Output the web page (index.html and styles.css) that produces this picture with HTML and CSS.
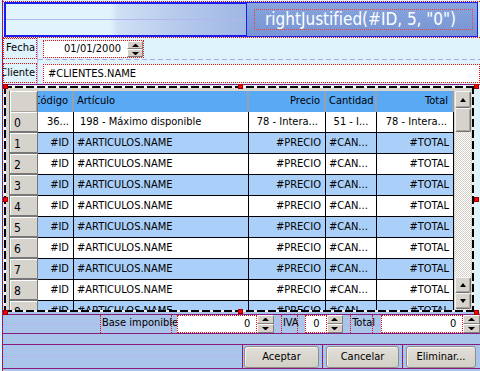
FILE: index.html
```html
<!DOCTYPE html>
<html lang="es">

<head>
    <meta charset="UTF-8">
    <meta name="viewport" content="width=device-width, initial-scale=1.0">
    <title>Pedido - diseño</title>
    <link rel="stylesheet" href="styles.css">
</head>

<body>
    <div class="form">
        <div class="banner">
            <div class="banner-art"></div>
            <div class="banner-title"><span class="title-field">rightJustified(#ID, 5, "0")</span></div>
        </div>

        <div class="fields">
            <div class="field-row">
                <label class="field-label">Fecha</label>
                <div class="spin-edit">
                    <div class="edit date-edit">01/01/2000</div>
                    <div class="spin"><span class="spin-up"></span><span class="spin-down"></span></div>
                </div>
            </div>
            <div class="field-row client-row">
                <label class="field-label">Cliente</label>
                <div class="edit client-edit">#CLIENTES.NAME</div>
            </div>
        </div>

        <div class="grid-frame">
            <div class="grid">
                <div class="grid-head">
                    <div class="corner"></div>
                    <div class="hcell c-cod right">Código</div>
                    <div class="hcell c-art">Artículo</div>
                    <div class="hcell c-pre right">Precio</div>
                    <div class="hcell c-can">Cantidad</div>
                    <div class="hcell c-tot right">Total</div>
                </div>
                <div class="grid-body">
                    <div class="grid-row">
                        <div class="rowhdr">0</div>
                        <div class="cell c-cod right">36...</div>
                        <div class="cell c-art first-art">198 - Máximo disponible</div>
                        <div class="cell c-pre right pad7">78 - Intera...</div>
                        <div class="cell c-can center">51 - I...</div>
                        <div class="cell c-tot right pad6">78 - Intera...</div>
                    </div>
                    <div class="grid-row">
                        <div class="rowhdr">1</div>
                        <div class="cell c-cod right">#ID</div>
                        <div class="cell c-art">#ARTICULOS.NAME</div>
                        <div class="cell c-pre right">#PRECIO</div>
                        <div class="cell c-can">#CAN...</div>
                        <div class="cell c-tot right">#TOTAL</div>
                    </div>
                    <div class="grid-row">
                        <div class="rowhdr">2</div>
                        <div class="cell c-cod right">#ID</div>
                        <div class="cell c-art">#ARTICULOS.NAME</div>
                        <div class="cell c-pre right">#PRECIO</div>
                        <div class="cell c-can">#CAN...</div>
                        <div class="cell c-tot right">#TOTAL</div>
                    </div>
                    <div class="grid-row">
                        <div class="rowhdr">3</div>
                        <div class="cell c-cod right">#ID</div>
                        <div class="cell c-art">#ARTICULOS.NAME</div>
                        <div class="cell c-pre right">#PRECIO</div>
                        <div class="cell c-can">#CAN...</div>
                        <div class="cell c-tot right">#TOTAL</div>
                    </div>
                    <div class="grid-row">
                        <div class="rowhdr">4</div>
                        <div class="cell c-cod right">#ID</div>
                        <div class="cell c-art">#ARTICULOS.NAME</div>
                        <div class="cell c-pre right">#PRECIO</div>
                        <div class="cell c-can">#CAN...</div>
                        <div class="cell c-tot right">#TOTAL</div>
                    </div>
                    <div class="grid-row">
                        <div class="rowhdr">5</div>
                        <div class="cell c-cod right">#ID</div>
                        <div class="cell c-art">#ARTICULOS.NAME</div>
                        <div class="cell c-pre right">#PRECIO</div>
                        <div class="cell c-can">#CAN...</div>
                        <div class="cell c-tot right">#TOTAL</div>
                    </div>
                    <div class="grid-row">
                        <div class="rowhdr">6</div>
                        <div class="cell c-cod right">#ID</div>
                        <div class="cell c-art">#ARTICULOS.NAME</div>
                        <div class="cell c-pre right">#PRECIO</div>
                        <div class="cell c-can">#CAN...</div>
                        <div class="cell c-tot right">#TOTAL</div>
                    </div>
                    <div class="grid-row">
                        <div class="rowhdr">7</div>
                        <div class="cell c-cod right">#ID</div>
                        <div class="cell c-art">#ARTICULOS.NAME</div>
                        <div class="cell c-pre right">#PRECIO</div>
                        <div class="cell c-can">#CAN...</div>
                        <div class="cell c-tot right">#TOTAL</div>
                    </div>
                    <div class="grid-row">
                        <div class="rowhdr">8</div>
                        <div class="cell c-cod right">#ID</div>
                        <div class="cell c-art">#ARTICULOS.NAME</div>
                        <div class="cell c-pre right">#PRECIO</div>
                        <div class="cell c-can">#CAN...</div>
                        <div class="cell c-tot right">#TOTAL</div>
                    </div>
                    <div class="grid-row">
                        <div class="rowhdr">9</div>
                        <div class="cell c-cod right">#ID</div>
                        <div class="cell c-art">#ARTICULOS.NAME</div>
                        <div class="cell c-pre right">#PRECIO</div>
                        <div class="cell c-can">#CAN...</div>
                        <div class="cell c-tot right">#TOTAL</div>
                    </div>
                </div>
            </div>
            <div class="vscroll">
                <span class="sb-btn"><i class="arrow-up"></i></span>
                <span class="sb-thumb"></span>
                <span class="sb-track"></span>
                <span class="sb-btn"><i class="arrow-up"></i></span>
                <span class="sb-btn"><i class="arrow-down"></i></span>
            </div>
            <!-- selection handles -->
            <span class="handle h-tl"></span>
            <span class="handle h-tm"></span>
            <span class="handle h-tr"></span>
            <span class="handle h-ml"></span>
            <span class="handle h-mr"></span>
            <span class="handle h-bl"></span>
            <span class="handle h-bm"></span>
            <span class="handle h-br"></span>
        </div>

        <div class="footer">
            <div class="totals">
                <label class="sum-label base-label">Base imponible</label>
                <div class="edit num-edit base-edit">0</div>
                <div class="spin"><span class="spin-up"></span><span class="spin-down"></span></div>
                <label class="sum-label iva-label">IVA</label>
                <div class="edit num-edit iva-edit">0</div>
                <div class="spin"><span class="spin-up"></span><span class="spin-down"></span></div>
                <label class="sum-label total-label">Total</label>
                <div class="edit num-edit total-edit">0</div>
                <div class="spin"><span class="spin-up"></span><span class="spin-down"></span></div>
            </div>
            <div class="band"></div>
            <div class="buttons">
                <div class="btn-slot slot-ok"><button class="btn">Aceptar</button></div>
                <div class="btn-slot slot-cancel"><button class="btn">Cancelar</button></div>
                <div class="btn-slot slot-del"><button class="btn">Eliminar...</button></div>
            </div>
        </div>
    </div>
</body>

</html>
```

FILE: styles.css
```css
* {
    box-sizing: border-box;
}

body {
    margin: 0;
    width: 480px;
    height: 371px;
    overflow: hidden;
    background-color: #dff3fc;
    font-family: "DejaVu Sans", sans-serif;
    font-stretch: condensed;
    font-size: 11px;
    color: #000;
}

.form {
    width: 478px;
    height: 371px;
    margin-left: 2px;
    border-left: 1px dotted #e81010;
    background: linear-gradient(#2424f0, #2424f0) left top / 1px 100% no-repeat;
    background-origin: border-box;
    overflow: hidden;
}

/* banner */

.banner {
    display: flex;
    height: 37px;
    margin-top: 1px;
    padding-left: 1px;
    border-top: 1px dotted #e81010;
    border-bottom: 1px dotted #e81010;
}

.banner-art {
    flex: 1;
    border: 2px solid #1c1cec;
    border-right: none;
    background:
        linear-gradient(to bottom, transparent 15px, #b4b4ee 15px, #b4b4ee 16px, transparent 16px),
        linear-gradient(90deg, #e1f4fc 0, #e1f4fc 104px, #cfe0f4 112px, #b6caec 170px, #9fb7e4 100%);
}

.banner-title {
    display: flex;
    align-items: center;
    width: 232px;
    margin-right: 2px;
    padding-left: 7px;
    border: 1px solid #1c1cec;
    background: linear-gradient(#88a5dd, #7795d4);
}

.title-field {
    width: 219px;
    height: 21px;
    padding-left: 10px;
    border: 1px dotted #f03c3c;
    color: #fff;
    font-size: 17px;
    line-height: 18px;
    white-space: nowrap;
}

/* header fields */

.fields {
    height: 47px;
    border-bottom: 1px dotted #e81010;
    background:
        linear-gradient(#2424f0, #2424f0) left bottom / 100% 1px no-repeat,
        linear-gradient(#b8b8f2, #b8b8f2) 34px 0 / 1px 100% no-repeat,
        repeating-linear-gradient(90deg, #a8a8ee 0, #a8a8ee 5px, transparent 5px, transparent 8px) 35px 21px / 100% 1px no-repeat;
    background-origin: border-box;
}

.field-row {
    display: flex;
    align-items: flex-start;
    height: 21px;
}

.client-row {
    margin-top: 4px;
    height: 20px;
}

.field-label {
    display: flex;
    justify-content: flex-end;
    width: 34px;
    height: 21px;
    padding-right: 1px;
    border: 1px dotted #e81010;
    line-height: 17px;
    white-space: nowrap;
}

.client-row .field-label {
    height: 20px;
}

.edit {
    background-color: #fff;
    line-height: 15px;
    white-space: nowrap;
}

.spin-edit {
    display: flex;
    margin: 2px 0 0 6px;
    border: 1px dotted #e81010;
}

.date-edit {
    width: 83px;
    height: 16px;
    padding-right: 6px;
    text-align: right;
}

.client-edit {
    flex: 1;
    height: 19px;
    margin: 1px 0 0 6px;
    padding-left: 4px;
    border: 1px dotted #e81010;
    line-height: 17px;
}

.spin {
    display: flex;
    flex-direction: column;
    width: 16px;
    height: 16px;
}

.spin-up,
.spin-down {
    flex: 1;
    display: flex;
    align-items: center;
    justify-content: center;
    background-color: #d4d0c8;
    border: 1px solid;
    border-color: #fff #808080 #808080 #fff;
}

.spin-up::after,
.spin-down::after {
    content: "";
    width: 1px;
    border-left: 3px solid transparent;
    border-right: 3px solid transparent;
}

.spin-up::after {
    border-bottom: 3px solid #000;
}

.spin-down::after {
    border-top: 3px solid #000;
}

/* grid */

.grid-frame {
    position: relative;
    display: flex;
    gap: 1px;
    width: 470px;
    height: 226px;
    margin: 1px 0 0 1px;
    padding: 5px 3px 2px 5px;
    background:
        repeating-linear-gradient(90deg, #000 0, #000 8px, #f0f0f0 8px, #f0f0f0 11px) top / 100% 2px no-repeat,
        repeating-linear-gradient(90deg, #000 0, #000 8px, #f0f0f0 8px, #f0f0f0 11px) bottom / 100% 2px no-repeat,
        repeating-linear-gradient(#000 0, #000 8px, #f0f0f0 8px, #f0f0f0 11px) left / 2px 100% no-repeat,
        repeating-linear-gradient(#000 0, #000 8px, #f0f0f0 8px, #f0f0f0 11px) right / 2px 100% no-repeat,
        #d8d5ce;
}

.grid {
    width: 445px;
    height: 219px;
    overflow: hidden;
    background-color: #fff;
}

.grid-head,
.grid-row {
    display: flex;
    height: 21px;
}

.grid-head {
    background-color: #5aa9f5;
}

.corner {
    width: 29px;
    border-left: 1px solid #777;
    border-right: 1px solid #777;
    background-color: #d6d3cd;
    box-shadow: inset 1px 1px #fff, inset -1px -1px #a8a59e;
}

.hcell,
.cell {
    display: flex;
    overflow: hidden;
    white-space: nowrap;
    padding: 0 3px;
}

.hcell {
    border-right: 2px solid #97a2ae;
    line-height: 20px;
}

.cell {
    border-right: 1px solid #000;
    border-bottom: 1px solid #000;
    line-height: 19px;
}

.right {
    justify-content: flex-end;
    padding-right: 4px;
}

.center {
    justify-content: center;
}

.pad7 {
    padding-right: 7px;
}

.pad6 {
    padding-right: 6px;
}

.c-cod {
    width: 36px;
}

.c-art {
    width: 175px;
}

.first-art {
    padding-left: 6px;
}

.c-pre {
    width: 77px;
}

.c-can {
    width: 51px;
}

.c-tot {
    width: 77px;
}

.grid-row:nth-child(even) {
    background-color: #aad0fa;
}

.rowhdr {
    width: 29px;
    padding: 4px 0 0 4px;
    border-left: 1px solid #777;
    border-right: 1px solid #777;
    border-bottom: 2px solid #777;
    background-color: #d6d3cd;
    box-shadow: inset 1px 1px #fff;
    font-size: 12px;
    line-height: 14px;
}

.vscroll {
    display: flex;
    flex-direction: column;
    width: 16px;
    height: 219px;
    padding-bottom: 1px;
    background: repeating-conic-gradient(#fff 0 25%, #d4d0c8 0 50%) 0 0 / 2px 2px;
}

.sb-btn,
.sb-thumb {
    display: flex;
    align-items: center;
    justify-content: center;
    height: 16px;
    background-color: #d6d3cc;
    border: 1px solid;
    border-color: #f4f4f4 #707070 #707070 #f4f4f4;
    border-radius: 2px;
    box-shadow: inset -1px -1px #a8a59e;
}

.sb-btn:first-child {
    height: 17px;
}

.sb-thumb {
    height: 24px;
}

.sb-track {
    flex: 1;
}

.arrow-up,
.arrow-down {
    width: 1px;
    border-left: 3px solid transparent;
    border-right: 3px solid transparent;
}

.arrow-up {
    border-bottom: 4px solid #000;
}

.arrow-down {
    border-top: 4px solid #000;
}

.handle {
    position: absolute;
    width: 5px;
    height: 5px;
    background-color: #f00;
    border: 1px solid #900;
}

.h-tl { left: -1px; top: -2px; }
.h-tm { left: 234px; top: -2px; }
.h-tr { right: -5px; top: -2px; }
.h-ml { left: -1px; top: 111px; }
.h-mr { right: -5px; top: 111px; }
.h-bl { left: -1px; bottom: -3px; }
.h-bm { left: 234px; bottom: -2px; }
.h-br { right: -5px; bottom: -3px; }

/* footer */

.footer {
    height: 59px;
    padding-top: 2px;
    background-color: #a9c5e9;
}

.totals,
.buttons {
    display: flex;
    border-top: 1px dotted #e81010;
    border-bottom: 1px dotted #e81010;
    background-origin: border-box;
}

.totals {
    align-items: stretch;
    height: 20px;
    padding-left: 97px;
    background:
        linear-gradient(#2424f0, #2424f0) left top / 100% 1px no-repeat,
        linear-gradient(#2424f0, #2424f0) left bottom / 100% 1px no-repeat,
        linear-gradient(#b6b6ee, #b6b6ee) 0 10px / 100% 1px no-repeat;
    background-origin: border-box;
}

.sum-label {
    padding: 0 1px;
    border-left: 1px dotted #e81010;
    border-right: 1px dotted #e81010;
    line-height: 16px;
    white-space: nowrap;
}

.base-label {
    width: 72px;
}

.iva-label {
    width: 17px;
    margin-left: 7px;
}

.total-label {
    width: 23px;
    margin-left: 7px;
}

.num-edit {
    height: 18px;
    padding-right: 6px;
    border: 1px dotted #e81010;
    text-align: right;
}

.base-edit {
    width: 82px;
    margin-left: 5px;
}

.iva-edit {
    width: 22px;
    margin-left: 7px;
}

.total-edit {
    width: 84px;
    margin-left: 8px;
}

.totals .spin {
    height: 18px;
    width: 17px;
}

.band {
    height: 10px;
}

.buttons {
    height: 25px;
    padding-left: 239px;
    background:
        linear-gradient(#2424f0, #2424f0) left top / 100% 1px no-repeat,
        linear-gradient(#2424f0, #2424f0) left bottom / 100% 1px no-repeat,
        linear-gradient(#b6b6ee, #b6b6ee) 0 12px / 100% 1px no-repeat;
    background-origin: border-box;
}

.btn-slot {
    display: flex;
    align-items: center;
    border-left: 1px dotted #e81010;
    background: linear-gradient(#2424f0, #2424f0) left top / 1px 100% no-repeat;
    background-origin: border-box;
}

.slot-ok {
    width: 80px;
    padding-left: 1px;
}

.slot-ok .btn {
    width: 75px;
}

.slot-cancel {
    width: 80px;
    padding-left: 3px;
}

.slot-cancel .btn {
    width: 73px;
}

.slot-del {
    flex: 1;
    padding-left: 3px;
}

.slot-del .btn {
    width: 70px;
}

.btn {
    height: 22px;
    margin: 0;
    padding: 0;
    border: 1px solid #8f8d88;
    border-radius: 3px;
    background: linear-gradient(#e2dfd9, #d2cfc7);
    box-shadow: inset 1px 1px #f4f3f0;
    font-family: inherit;
    font-stretch: condensed;
    font-size: 11px;
    color: #000;
}
```
